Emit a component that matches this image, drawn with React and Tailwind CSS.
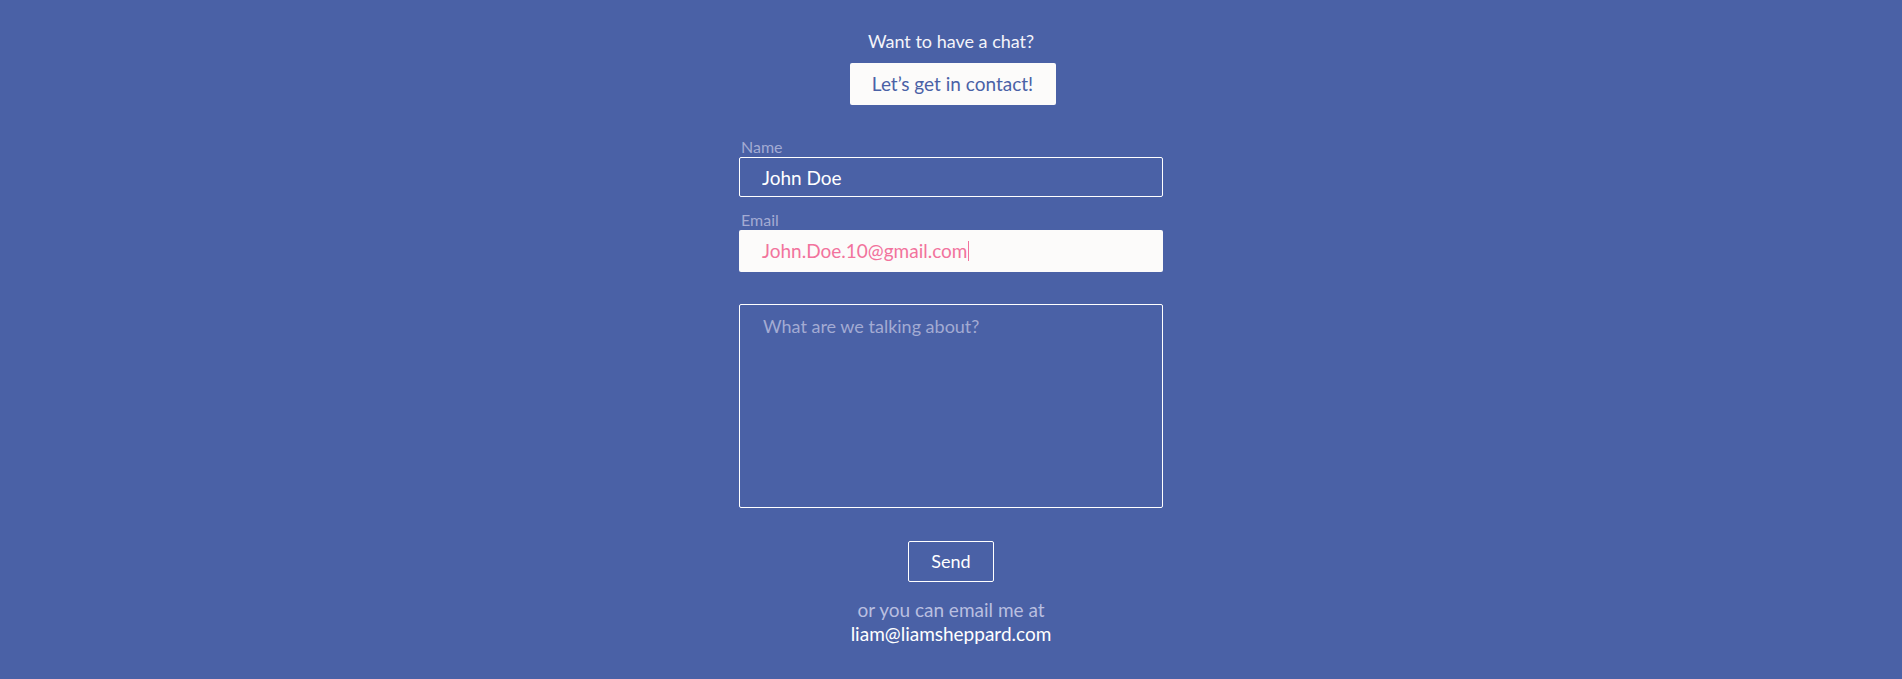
import React from 'react';

export default function App() {
    return (
        <div className="min-h-[679px] w-full bg-[#4a61a6] flex flex-col items-center pt-[29px] text-white" style={{ fontFamily: 'Lato, "Open Sans", sans-serif' }}>
            <p className="text-[18px] leading-[24px] text-[#f4f4fa]">Want to have a chat?</p>
            <button className="mt-[10px] ml-[3px] w-[206px] h-[42px] bg-[#fcfbfa] rounded-[2px] text-[#4a61a6] text-[19px]">
                Let’s get in contact!
            </button>

            <form className="w-[424px] mt-[34px] flex flex-col" onSubmit={e => e.preventDefault()}>
                <label className="text-[16px] leading-[16px] mb-[2px] text-[#a3abd3] pl-[2px]">Name</label>
                <input
                    defaultValue="John Doe"
                    className="h-[40px] border border-white rounded-[2px] bg-transparent px-[22px] text-[19px] text-white outline-none"
                />
                <label className="mt-[15px] mb-[2px] text-[16px] leading-[16px] text-[#a3abd3] pl-[2px]">Email</label>
                <div className="h-[42px] bg-[#fcfbfa] rounded-[2px] px-[23px] flex items-center text-[19px] text-[#f2739d]">
                    John.Doe.10@gmail.com<span className="inline-block w-[1px] h-[20px] bg-[#f2739d] ml-[1px]" />
                </div>
                <textarea
                    placeholder="What are we talking about?"
                    className="mt-[32px] h-[204px] border border-white rounded-[2px] bg-transparent px-[23px] py-[8px] text-[18px] text-white outline-none resize-none placeholder:text-[#a3abd3]"
                />
                <button className="self-center mt-[33px] w-[86px] h-[41px] border border-white rounded-[2px] text-[18px] text-white">
                    Send
                </button>
            </form>

            <p className="mt-[16px] text-[19px] leading-[24px] text-[#b9bfe0]">or you can email me at</p>
            <p className="text-[19px] leading-[24px] text-white">liam@liamsheppard.com</p>
        </div>
    );
}
